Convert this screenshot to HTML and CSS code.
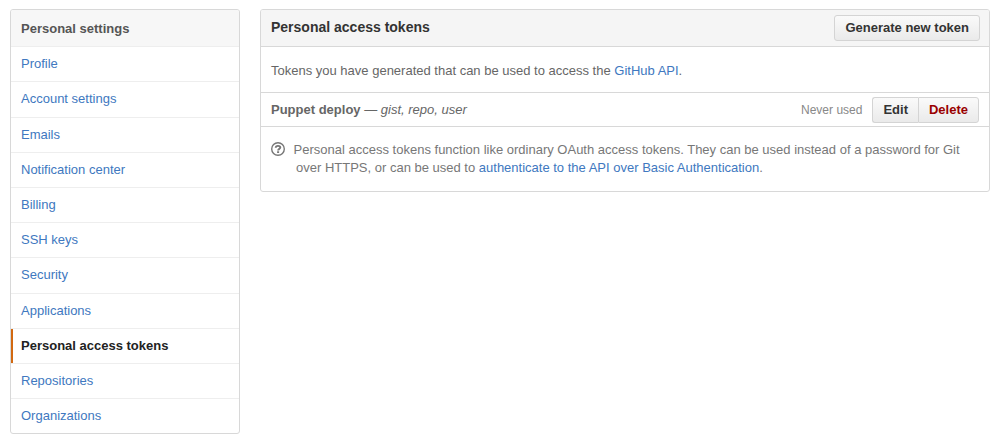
FILE: index.html
```
<!DOCTYPE html>
<html lang="en">

<head>
    <meta charset="UTF-8">
    <meta name="viewport" content="width=device-width, initial-scale=1.0">
    <title>Personal access tokens</title>
    <link rel="stylesheet" href="styles.css">
</head>

<body>
    <div class="settings">
        <nav class="menu" aria-labelledby="menu-heading">
            <h3 class="menu-heading" id="menu-heading">Personal settings</h3>
            <ul class="menu-list">
                <li><a href="#" class="menu-item">Profile</a></li>
                <li><a href="#" class="menu-item">Account settings</a></li>
                <li><a href="#" class="menu-item">Emails</a></li>
                <li><a href="#" class="menu-item">Notification center</a></li>
                <li><a href="#" class="menu-item">Billing</a></li>
                <li><a href="#" class="menu-item">SSH keys</a></li>
                <li><a href="#" class="menu-item">Security</a></li>
                <li><a href="#" class="menu-item">Applications</a></li>
                <li><a href="#" class="menu-item selected" aria-current="page">Personal access tokens</a></li>
                <li><a href="#" class="menu-item">Repositories</a></li>
                <li><a href="#" class="menu-item">Organizations</a></li>
            </ul>
        </nav>

        <main class="box">
            <header class="box-header">
                <h1 class="box-title">Personal access tokens</h1>
                <button type="button" class="button">Generate new token</button>
            </header>

            <p class="box-intro">
                Tokens you have generated that can be used to access the <a href="#">GitHub API</a>.
            </p>

            <div class="token">
                <div class="token-name"><strong>Puppet deploy</strong> — <em>gist, repo, user</em></div>
                <span class="token-used">Never used</span>
                <div class="button-group">
                    <button type="button" class="button">Edit</button>
                    <button type="button" class="button danger">Delete</button>
                </div>
            </div>

            <p class="help">
                <svg class="help-icon" width="14" height="14" viewBox="0 0 14 14" aria-hidden="true">
                    <circle cx="7" cy="7" r="6.3" fill="none" stroke="currentColor" stroke-width="1.4" />
                    <path d="M4.7 5.8C4.8 4.5 5.7 3.9 7 3.9c1.400 0 2.300.6 2.300 1.700C9.300 6.900 7.100 6.900 7.100 8.500" fill="none" stroke="currentColor" stroke-width="1.900" />
                    <path d="M6.100 9.200h2v1.800h-2z" fill="currentColor" />
                </svg>
                Personal access tokens function like ordinary OAuth access tokens. They can be used instead of a
                password for Git over HTTPS, or can be used to
                <a href="#">authenticate to the API over Basic Authentication</a>.
            </p>
        </main>
    </div>
</body>

</html>
```
FILE: styles.css
```
* {
    margin: 0;
    padding: 0;
    box-sizing: border-box;
}

body {
    padding: 9px 7px 8px 10px;
    background-color: #fff;
    color: #666;
    font: 13px/1.4 "Liberation Sans", Arial, sans-serif;
}

a {
    color: #4078c0;
    text-decoration: none;
}

a:hover {
    text-decoration: underline;
}

.settings {
    display: flex;
    align-items: flex-start;
    gap: 20px;
}

/* Side menu */
.menu {
    flex: 0 0 230px;
    border: 1px solid #d8d8d8;
    border-radius: 3px;
    overflow: hidden;
}

.menu-heading {
    padding: 10px 10px 8px;
    background-color: #f7f7f7;
    color: #555;
    font-size: 13px;
}

.menu-list {
    list-style: none;
}

.menu-item {
    display: block;
    padding: 8px 10px;
    border-top: 1px solid #eee;
}

.menu-item.selected {
    color: #222;
    font-weight: bold;
    background: linear-gradient(#d26911, #d26911) left / 2px 100% no-repeat;
}

/* Token box */
.box {
    flex: 1;
    min-width: 0;
    border: 1px solid #d8d8d8;
    border-radius: 3px;
    overflow: hidden;
}

.box-header {
    display: flex;
    align-items: center;
    justify-content: space-between;
    padding: 5px 9px 5px 10px;
    border-bottom: 1px solid #d8d8d8;
    background-color: #f5f5f5;
}

.box-title {
    color: #333;
    font-size: 14px;
}

.box-intro {
    padding: 15px 10px 12px;
    border-bottom: 1px solid #d8d8d8;
}

.token {
    display: flex;
    align-items: center;
    gap: 10px;
    padding: 4px 10px 3px;
    border-bottom: 1px solid #d8d8d8;
}

.token-name {
    flex: 1;
}

.token-used {
    color: #888;
    font-size: 12px;
}

.button {
    height: 26px;
    padding: 0 10px;
    border: 1px solid #d4d4d4;
    border-radius: 3px;
    background: linear-gradient(#fafafa, #eaeaea);
    color: #333;
    font: bold 13px/24px "Liberation Sans", Arial, sans-serif;
    cursor: pointer;
}

.button.danger {
    color: #900;
}

.button-group {
    display: flex;
}

.button-group .button:first-child {
    border-right: 0;
    border-radius: 3px 0 0 3px;
}

.button-group .button:last-child {
    border-radius: 0 3px 3px 0;
}

.help {
    padding: 14px 10px 13px 35px;
    color: #777;
    text-indent: -25px;
}

.help-icon {
    margin-right: 5px;
    vertical-align: -2px;
}
```
